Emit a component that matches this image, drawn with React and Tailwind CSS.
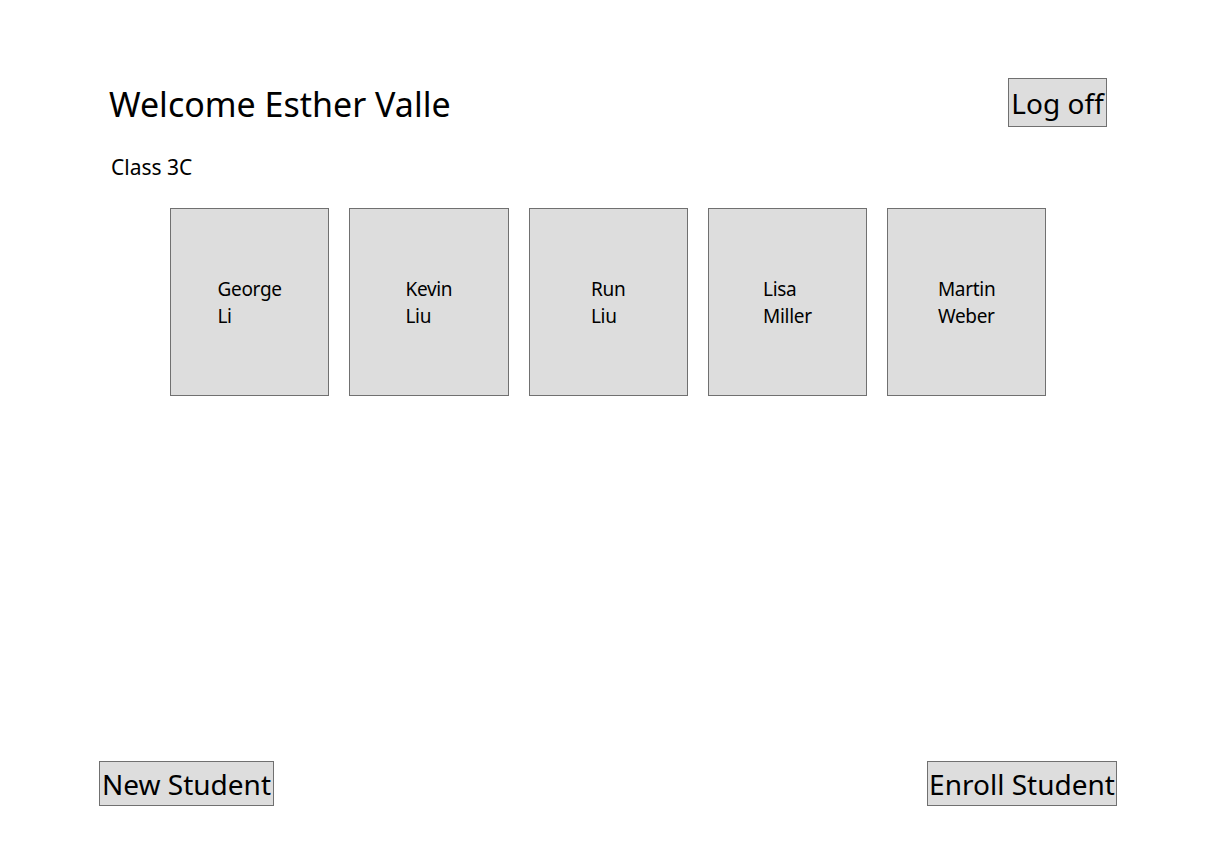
export default function App() {
  const students = [
    ["George", "Li"],
    ["Kevin", "Liu"],
    ["Run", "Liu"],
    ["Lisa", "Miller"],
    ["Martin", "Weber"],
  ];
  const font = { fontFamily: '"Noto Sans", "Open Sans", sans-serif' };
  return (
    <div className="w-[1232px] h-[856px] bg-white text-black flex flex-col" style={font}>
      <div className="flex items-start justify-between pl-[109px] pr-[125px] pt-[78px]">
        <div className="text-[34px] leading-[48px] mt-[2px]">Welcome Esther Valle</div>
        <button className="h-[49px] w-[99px] border border-[#707070] bg-[#dddddd] text-[28px] leading-none flex items-center justify-center">
          Log off
        </button>
      </div>
      <div className="pl-[111px] mt-[26px] text-[21px] leading-[26px]">Class 3C</div>
      <div className="flex gap-[20px] pl-[170px] mt-[28px]">
        {students.map(([f, l]) => (
          <div
            key={f}
            className="w-[159.25px] h-[188px] border border-[#707070] bg-[#dddddd] flex items-center justify-center"
          >
            <div className="text-left text-[19px] leading-[27px] tracking-[-0.3px] mt-[2px]">
              <div>{f}</div>
              <div>{l}</div>
            </div>
          </div>
        ))}
      </div>
      <div className="flex-1" />
      <div className="flex justify-between pl-[99px] pr-[115px] pb-[50px]">
        <button className="h-[45px] w-[175px] border border-[#707070] bg-[#dddddd] text-[28px] leading-none flex items-center justify-center whitespace-nowrap">
          New Student
        </button>
        <button className="h-[45px] w-[190px] border border-[#707070] bg-[#dddddd] text-[28px] leading-none flex items-center justify-center whitespace-nowrap">
          Enroll Student
        </button>
      </div>
    </div>
  );
}
